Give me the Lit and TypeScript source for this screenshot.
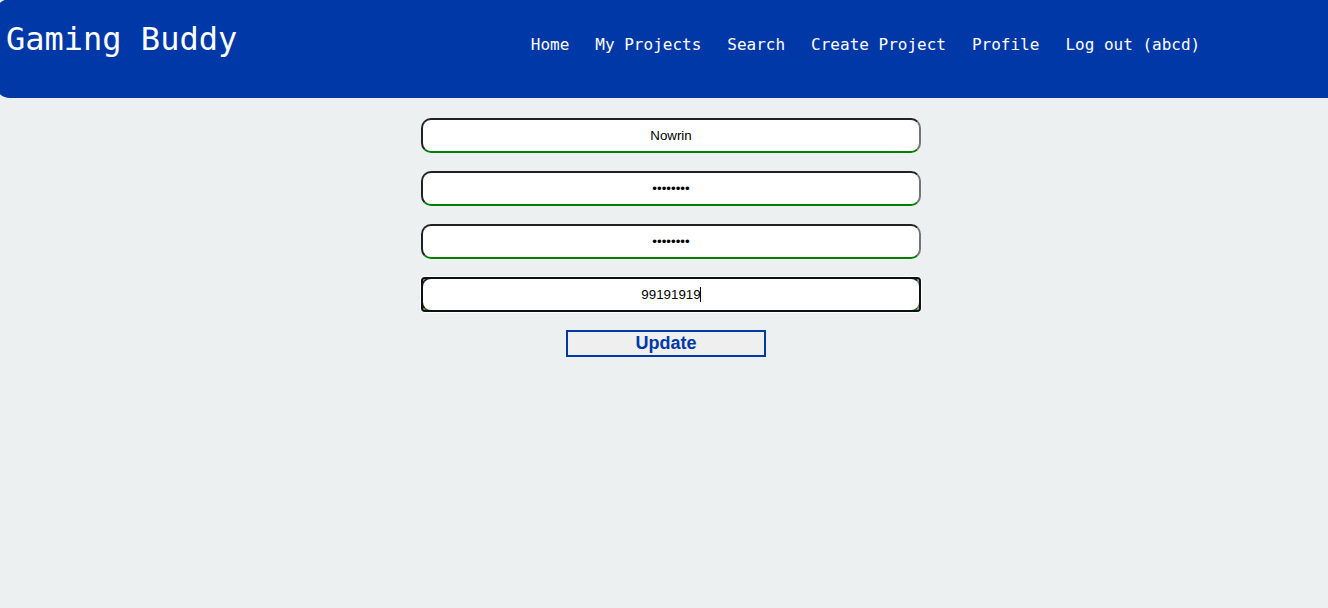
import { LitElement, html, css } from "lit";
import { customElement, query } from "lit/decorators.js";

@customElement("site-header")
class SiteHeader extends LitElement {
  static styles = css`
    :host {
      display: block;
      overflow: hidden;
    }
    .bar {
      display: flex;
      box-sizing: border-box;
      min-height: 99px;
      margin: -1px 0 0 -5px;
      padding: 21px 10px 0 11px;
      border-radius: 15px 0 0 15px;
      background: #0038a8;
      color: #fff;
      font-family: Consolas, "DejaVu Sans Mono", monospace;
    }
    .brand {
      flex: 0 0 40%;
      margin: 0;
      font-size: 32px;
      line-height: 38px;
      font-weight: 400;
      white-space: nowrap;
    }
    .links {
      display: flex;
      gap: 26px;
      margin: 0;
      padding: 15px 0 0;
      list-style: none;
      font-size: 16px;
      line-height: 20px;
      white-space: nowrap;
    }
    .link {
      color: inherit;
      text-decoration: none;
    }
  `;

  private links = ["Home", "My Projects", "Search", "Create Project", "Profile", "Log out (abcd)"];

  render() {
    return html`<header class="bar">
      <h1 class="brand">Gaming Buddy</h1>
      <nav>
        <ul class="links">
          ${this.links.map((text) => html`<li><a class="link" href="#">${text}</a></li>`)}
        </ul>
      </nav>
    </header>`;
  }
}

@customElement("app-root")
class AppRoot extends LitElement {
  static styles = css`
    :host {
      display: block;
      min-height: 100vh;
      background: #ecf0f1;
      font-family: "Liberation Sans", Arial, sans-serif;
    }
    .form {
      display: flex;
      flex-direction: column;
      align-items: center;
      gap: 18px;
      padding: 20px 0 20px 14px;
    }
    .field {
      position: relative;
      display: block;
      width: 500px;
      max-width: 100%;
    }
    .input {
      display: block;
      box-sizing: border-box;
      width: 100%;
      height: 35px;
      padding: 0 10px;
      border: 2px solid;
      border-color: #212121 #767676 green #212121;
      border-radius: 10px;
      outline: none;
      background: #fff;
      color: #000;
      font-family: inherit;
      text-align: center;
      caret-color: transparent;
    }
    .field:focus-within::after {
      content: "";
      position: absolute;
      inset: 0;
      border: 2px solid #101010;
      border-radius: 4px;
      box-shadow: 0 0 0 1px #fff;
      pointer-events: none;
    }
    .caret {
      position: absolute;
      top: 10px;
      left: calc(50% + 29px);
      width: 1px;
      height: 15px;
      background: #000;
      pointer-events: none;
    }
    .submit {
      box-sizing: border-box;
      width: 200px;
      height: 27px;
      margin-right: 10px;
      padding: 0 0 2px;
      border: 2px solid #0038a8;
      background: #efefef;
      color: #0038a8;
      font-family: inherit;
      font-size: 18px;
      line-height: 20px;
      font-weight: 700;
    }
  `;

  @query("#phone") private phone!: HTMLInputElement;

  firstUpdated() {
    this.phone.focus();
    this.phone.setSelectionRange(8, 8);
  }

  render() {
    return html`
      <site-header></site-header>
      <main>
        <form class="form" @submit=${(e: Event) => e.preventDefault()}>
          <label class="field"><input class="input" type="text" aria-label="Name" value="Nowrin" /></label>
          <label class="field"><input class="input" type="password" aria-label="Password" value="abcd1234" /></label>
          <label class="field"><input class="input" type="password" aria-label="Confirm password" value="abcd1234" /></label>
          <label class="field"
            ><input class="input" id="phone" type="text" aria-label="Phone" value="99191919" /><span class="caret"></span
          ></label>
          <button class="submit" type="submit">Update</button>
        </form>
      </main>
    `;
  }
}
